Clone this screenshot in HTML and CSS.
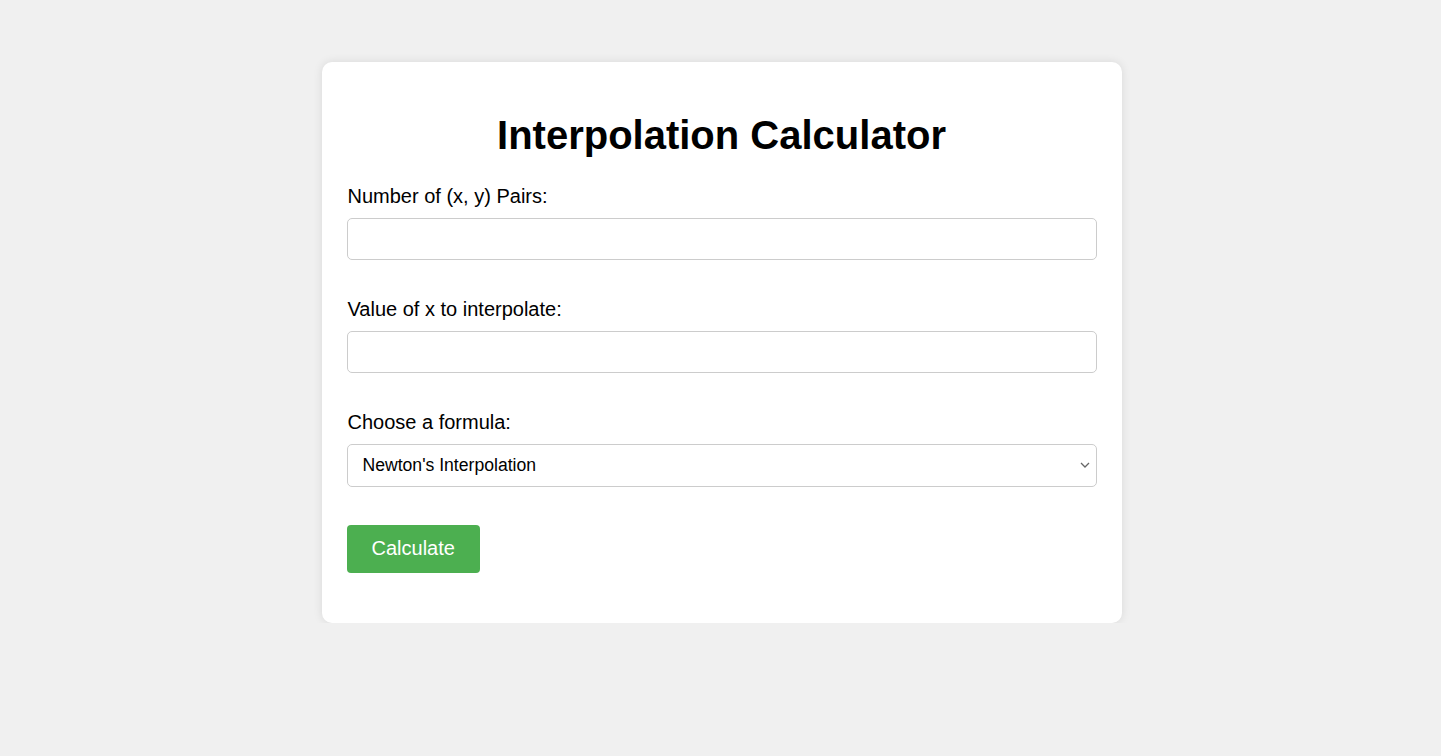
FILE: index.html
```html
<!DOCTYPE html>
<html lang="en">
<head>
<meta charset="utf-8">
<title>Interpolation Calculator</title>
<link rel="stylesheet" href="styles.css">
</head>
<body>
<main class="card">
  <h1 class="title">Interpolation Calculator</h1>
  <form class="form">
    <div class="group">
      <label class="label" for="pairs">Number of (x, y) Pairs:</label>
      <input class="field" id="pairs" type="number">
    </div>
    <div class="group">
      <label class="label" for="xval">Value of x to interpolate:</label>
      <input class="field" id="xval" type="number">
    </div>
    <div class="group">
      <label class="label" for="formula">Choose a formula:</label>
      <select class="field select" id="formula">
        <option>Newton's Interpolation</option>
        <option>Lagrange's Interpolation</option>
      </select>
    </div>
    <button class="btn" type="button">Calculate</button>
  </form>
</main>
</body>
</html>
```
FILE: styles.css
```css
html, body {
  margin: 0;
  padding: 0;
}
body {
  background: #f0f0f0;
  font-family: "Liberation Sans", Arial, sans-serif;
  color: #000;
  padding-top: 62px;
}
.card {
  box-sizing: border-box;
  width: 800px;
  margin: 0 auto;
  padding: 25px 25px 50px;
  background: #fff;
  border-radius: 10px;
  box-shadow: 0 0 10px rgba(0, 0, 0, 0.1);
  position: relative;
  left: 1px;
}
.title {
  font-size: 40px;
  font-weight: bold;
  text-align: center;
  margin: 24.8px 0 26.8px;
  line-height: 46px;
}
.form {
  display: flex;
  flex-direction: column;
  gap: 38px;
  align-items: flex-start;
}
.group {
  display: flex;
  flex-direction: column;
  gap: 10px;
  width: 100%;
}
.label {
  font-size: 20px;
  line-height: 23px;
  padding-left: 1px;
}
.field {
  box-sizing: border-box;
  width: 100%;
  height: 42px;
  padding: 10px;
  border: 1px solid #ccc;
  border-radius: 5px;
  font-family: "Liberation Sans", Arial, sans-serif;
  font-size: 17.6px;
  background-color: #fff;
  color: #000;
}
.select {
  height: 43px;
  padding: 0 30px 0 15px;
  -webkit-appearance: none;
  appearance: none;
  background-image: url("data:image/svg+xml,%3Csvg xmlns='http://www.w3.org/2000/svg' width='10' height='6' viewBox='0 0 10 6'%3E%3Cpath d='M1 1l4 4 4-4' fill='none' stroke='%23666' stroke-width='1.3'/%3E%3C/svg%3E");
  background-repeat: no-repeat;
  background-position: right 6px center;
  background-size: 10px 6px;
}
.btn {
  height: 48px;
  padding: 0 25px;
  background: #4caf50;
  color: #fff;
  border: none;
  border-radius: 4px;
  font-family: "Liberation Sans", Arial, sans-serif;
  font-size: 20px;
  cursor: pointer;
}
```
